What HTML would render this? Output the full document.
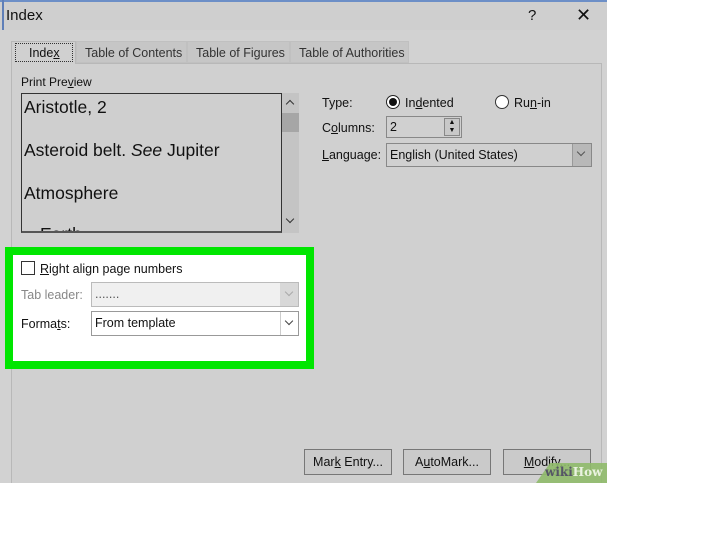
<!DOCTYPE html>
<html><head><style>
*{margin:0;padding:0;box-sizing:border-box}
body{width:728px;height:546px;background:#fff;position:relative;overflow:hidden;font-family:"Liberation Sans",sans-serif;font-size:12.5px;color:#111}
.a{position:absolute}
.u{text-decoration:underline}
.ch{position:absolute;width:8px;height:8px;border-right:1.5px solid #333;border-bottom:1.5px solid #333;transform:rotate(45deg)}
</style></head><body>
<div class="a" style="left:0;top:0;width:607px;height:483px;background:#cfcfcf;border-top:2px solid #6d8fc7"></div>
<div class="a" style="left:2px;top:0;width:2px;height:483px;background:#5f7fb8"></div>
<div class="a" style="left:6px;top:7px;font-size:15px">Index</div>
<div class="a" style="left:528px;top:7px;font-size:15px">?</div>
<div class="a" style="left:576px;top:5px;font-size:18px">✕</div>
<div class="a" style="left:0;top:30px;width:607px;height:453px;background:#d2d2d2"></div>
<div class="a" style="left:11px;top:63px;width:591px;height:420px;border:1px solid #b8b8b8;border-bottom:none;background:#d0d0d0"></div>
<div class="a" style="left:11px;top:41px;width:65px;height:23px;background:#d0d0d0;border:1px solid #b8b8b8;border-bottom:none"></div>
<div class="a" style="left:15px;top:43px;width:58px;height:19px;border:1px dotted #333"></div>
<div class="a" style="left:29px;top:46px">Inde<span class="u">x</span></div>
<div class="a" style="left:76px;top:41px;width:111px;height:22px;background:#c6c6c6;border:1px solid #c0c0c0"></div>
<div class="a" style="left:85px;top:46px;color:#333">Table of Contents</div>
<div class="a" style="left:187px;top:41px;width:103px;height:22px;background:#c6c6c6;border:1px solid #c0c0c0"></div>
<div class="a" style="left:196px;top:46px;color:#333">Table of Figures</div>
<div class="a" style="left:290px;top:41px;width:119px;height:22px;background:#c6c6c6;border:1px solid #c0c0c0"></div>
<div class="a" style="left:299px;top:46px;color:#333">Table of Authorities</div>
<div class="a" style="left:21px;top:75px;font-size:12px">Print Pre<span class="u">v</span>iew</div>
<div class="a" style="left:21px;top:93px;width:261px;height:140px;border:1px solid #333;border-bottom:2px solid #555;background:#cfcfcf;overflow:hidden;font-size:17.5px">
<div class="a" style="left:2px;top:3px">Aristotle, 2</div>
<div class="a" style="left:2px;top:46px">Asteroid belt. <i>See</i> Jupiter</div>
<div class="a" style="left:2px;top:89px">Atmosphere</div>
<div class="a" style="left:18px;top:130px">Earth</div>
</div>
<div class="a" style="left:282px;top:93px;width:17px;height:140px;background:#c4c4c4"></div>
<div class="a" style="left:282px;top:113px;width:17px;height:19px;background:#a6a6a6"></div>
<div class="ch" style="left:287px;top:101px;transform:rotate(225deg);width:6px;height:6px"></div>
<div class="ch" style="left:287px;top:216px;width:6px;height:6px"></div>
<div class="a" style="left:322px;top:96px">Type:</div>
<div class="a" style="left:386px;top:95px;width:14px;height:14px;border:1px solid #222;border-radius:50%;background:#fff"></div>
<div class="a" style="left:389px;top:98px;width:8px;height:8px;border-radius:50%;background:#111"></div>
<div class="a" style="left:405px;top:96px">In<span class="u">d</span>ented</div>
<div class="a" style="left:495px;top:95px;width:14px;height:14px;border:1px solid #333;border-radius:50%;background:#fff"></div>
<div class="a" style="left:514px;top:96px">Ru<span class="u">n</span>-in</div>
<div class="a" style="left:322px;top:121px">C<span class="u">o</span>lumns:</div>
<div class="a" style="left:386px;top:116px;width:76px;height:22px;border:1px solid #888;background:#d0d0d0"></div>
<div class="a" style="left:390px;top:120px">2</div>
<div class="a" style="left:444px;top:118px;width:16px;height:18px;border:1px solid #888;background:#c8c8c8;font-size:7px;line-height:8px;text-align:center">▲<br>▼</div>
<div class="a" style="left:322px;top:148px"><span class="u">L</span>anguage:</div>
<div class="a" style="left:386px;top:143px;width:206px;height:24px;border:1px solid #888;background:#d0d0d0"></div>
<div class="a" style="left:390px;top:148px">English (United States)</div>
<div class="a" style="left:572px;top:144px;width:19px;height:22px;background:#b8b8b8;border-left:1px solid #999"></div>
<div class="ch" style="left:578px;top:149px;width:6px;height:6px;border-color:#555"></div>
<div class="a" style="left:5px;top:247px;width:309px;height:122px;border:8px solid #00e600;background:#fff"></div>
<div class="a" style="left:21px;top:261px;width:14px;height:14px;border:1px solid #333;background:#fff"></div>
<div class="a" style="left:40px;top:262px"><span class="u">R</span>ight align page numbers</div>
<div class="a" style="left:21px;top:288px;color:#888">Tab leader:</div>
<div class="a" style="left:91px;top:282px;width:208px;height:25px;border:1px solid #bbb;background:#f0f0f0"></div>
<div class="a" style="left:95px;top:287px;color:#555">.......</div>
<div class="a" style="left:280px;top:283px;width:18px;height:23px;background:#d8d8d8"></div>
<div class="ch" style="left:286px;top:289px;width:6px;height:6px;border-color:#aaa"></div>
<div class="a" style="left:21px;top:317px">Forma<span class="u">t</span>s:</div>
<div class="a" style="left:91px;top:311px;width:208px;height:25px;border:1px solid #999;background:#fff"></div>
<div class="a" style="left:95px;top:316px">From template</div>
<div class="a" style="left:280px;top:312px;width:18px;height:23px;border-left:1px solid #ccc"></div>
<div class="ch" style="left:286px;top:318px;width:6px;height:6px;border-color:#444"></div>
<div class="a" style="left:304px;top:449px;width:88px;height:26px;border:1px solid #777;background:#cacaca;text-align:center;line-height:24px">Mar<span class="u">k</span> Entry...</div>
<div class="a" style="left:403px;top:449px;width:88px;height:26px;border:1px solid #777;background:#cacaca;text-align:center;line-height:24px">A<span class="u">u</span>toMark...</div>
<div class="a" style="left:503px;top:449px;width:88px;height:26px;border:1px solid #777;background:#cacaca;text-align:center;line-height:24px"><span class="u">M</span>odify...</div>
<svg class="a" style="left:536px;top:463px" width="71" height="20"><polygon points="14,0 71,0 71,20 0,20" fill="#8fba6a" opacity="0.9"/></svg>
<div class="a" style="left:545px;top:465px;font-family:'DejaVu Serif',serif;font-weight:bold;font-size:12px;color:#eaf3e0"><span style="color:#556">wiki</span>How</div>
</body></html>
